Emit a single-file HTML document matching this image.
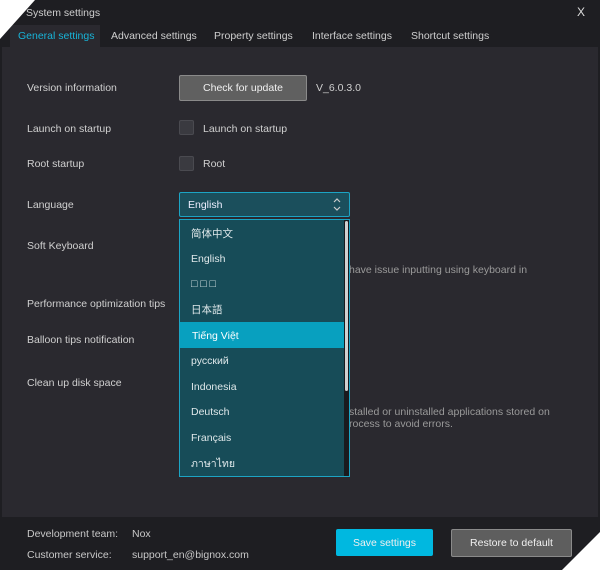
<!DOCTYPE html>
<html><head><meta charset="utf-8"><style>
*{margin:0;padding:0;box-sizing:border-box}
body{width:600px;height:570px;background:#1e1e22;font-family:"Liberation Sans","Noto Sans CJK SC",sans-serif;font-size:10.5px;line-height:13px;color:#d0d0d0;position:relative;overflow:hidden}
.a{position:absolute;white-space:nowrap}
.tab{position:absolute;top:26px;height:21px;line-height:21px;font-size:10.5px;color:#cfcfcf}
.cb{position:absolute;width:15px;height:15px;background:#3a3a40;border:1px solid #4a4a50;border-radius:2px}
.it{position:absolute;left:12px;font-size:10.5px;line-height:13px;height:13px;color:#dfe8ea}
.btn{position:absolute;text-align:center;color:#f0f0f0;font-size:10.5px}
</style></head><body>
<div class="a" style="left:26px;top:7px;color:#cfcfcf">System settings</div>
<div class="a" style="left:577px;top:6px;color:#ddd;font-size:12px">X</div>
<div class="a" style="left:10px;top:25px;width:90px;height:22px;background:#2a292f"></div>
<div class="tab" style="left:18px;color:#18b4d8">General settings</div>
<div class="tab" style="left:111px">Advanced settings</div>
<div class="tab" style="left:214px">Property settings</div>
<div class="tab" style="left:312px">Interface settings</div>
<div class="tab" style="left:411px">Shortcut settings</div>
<div class="a" style="left:2px;top:47px;width:596px;height:470px;background:#2a292f"></div>
<svg class="a" style="left:0;top:0" width="36" height="40"><polygon points="0,0 35,0 0,39" fill="#fff"/></svg>
<svg class="a" style="left:562px;top:532px" width="38" height="38"><polygon points="38,0 38,38 0,38" fill="#fff"/></svg>
<div class="a" style="left:27px;top:82px">Version information</div>
<div class="btn" style="left:179px;top:75px;width:128px;height:26px;line-height:24px;background:#606060;border:1px solid #8a8a8a;border-radius:2px">Check for update</div>
<div class="a" style="left:316px;top:82px">V_6.0.3.0</div>
<div class="a" style="left:27px;top:123px">Launch on startup</div>
<div class="cb" style="left:179px;top:120px"></div>
<div class="a" style="left:203px;top:123px">Launch on startup</div>
<div class="a" style="left:27px;top:158px">Root startup</div>
<div class="cb" style="left:179px;top:156px"></div>
<div class="a" style="left:203px;top:158px">Root</div>
<div class="a" style="left:27px;top:199px">Language</div>
<div class="a" style="left:27px;top:240px">Soft Keyboard</div>
<div class="a" style="left:27px;top:298px">Performance optimization tips</div>
<div class="a" style="left:27px;top:334px">Balloon tips notification</div>
<div class="a" style="left:27px;top:377px">Clean up disk space</div>
<div class="a" style="left:349px;top:264px;color:#9a9a9a">have issue inputting using keyboard in</div>
<div class="a" style="left:349px;top:406px;color:#9a9a9a">stalled or uninstalled applications stored on</div>
<div class="a" style="left:349px;top:418px;color:#9a9a9a">rocess to avoid errors.</div>
<div class="a" style="left:179px;top:192px;width:171px;height:25px;background:#1b4f5c;border:1px solid #1ca4c4;border-radius:2px"></div>
<div class="a" style="left:188px;top:199px;color:#eef">English</div>
<svg class="a" style="left:332px;top:197px" width="10" height="16"><path d="M2 5 L5 2 L8 5 M2 10 L5 13 L8 10" stroke="#ccc" stroke-width="1.2" fill="none"/></svg>
<div class="a" style="left:179px;top:219px;width:171px;height:258px;background:#174c58;border:1px solid #1ca4c4"></div>
<div class="a" style="left:180px;top:322px;width:164px;height:26px;background:#08a0bf"></div>
<div class="a" style="left:344px;top:220px;width:5px;height:256px;background:#1a1a1e"></div>
<div class="a" style="left:345px;top:221px;width:3px;height:170px;background:#d0d0d0;border-radius:2px"></div>
<div class="it" style="left:191px;top:228px">简体中文</div>
<div class="it" style="left:191px;top:253px">English</div>
<div class="it" style="left:191px;top:278px">□ □ □</div>
<div class="it" style="left:191px;top:304px">日本語</div>
<div class="it" style="left:192px;top:330px;color:#fff">Tiếng Việt</div>
<div class="it" style="left:191px;top:355px">русский</div>
<div class="it" style="left:191px;top:381px">Indonesia</div>
<div class="it" style="left:191px;top:406px">Deutsch</div>
<div class="it" style="left:191px;top:432px">Français</div>
<div class="it" style="left:191px;top:458px">ภาษาไทย</div>
<div class="a" style="left:27px;top:528px;color:#c8c8c8">Development team:</div>
<div class="a" style="left:132px;top:528px;color:#c8c8c8">Nox</div>
<div class="a" style="left:27px;top:549px;color:#c8c8c8">Customer service:</div>
<div class="a" style="left:132px;top:549px;color:#c8c8c8">support_en@bignox.com</div>
<div class="btn" style="left:336px;top:529px;width:97px;height:27px;line-height:28px;background:#00b8e0;border-radius:2px">Save settings</div>
<div class="btn" style="left:451px;top:529px;width:121px;height:28px;line-height:26px;background:#5e5e5e;border:1px solid #8a8a8a;border-radius:2px">Restore to default</div>
</body></html>
